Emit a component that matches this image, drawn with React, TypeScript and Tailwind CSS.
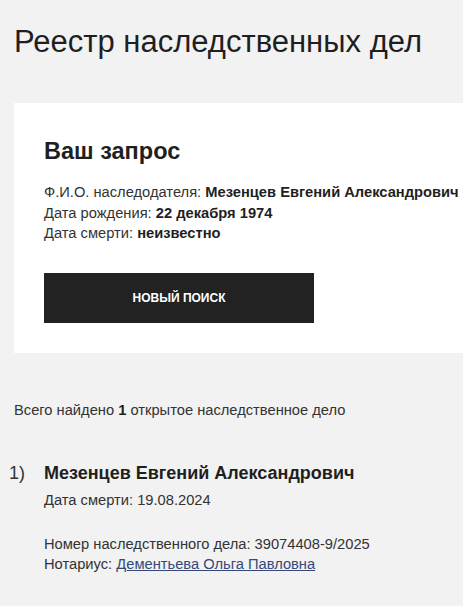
export default function App() {
  return (
    <div
      className="min-h-[606px] w-[463px] overflow-hidden bg-[#f2f2f2] text-[#222]"
      style={{ fontFamily: '"Liberation Sans", Arial, sans-serif' }}
    >
      <h1 className="pl-[14px] pt-[24px] text-[31px] leading-[36px] font-normal text-[#1f1f1f]">
        Реестр наследственных дел
      </h1>

      <div className="ml-[14px] mt-[43px] w-[520px] bg-white pl-[30px] pt-[34px] pb-[30px]">
        <h2 className="text-[23.5px] leading-[28px] font-bold text-[#1f1f1f]">Ваш запрос</h2>
        <div className="mt-[17px] text-[14.7px] leading-[20.5px] text-[#333] whitespace-nowrap">
          <p>
            Ф.И.О. наследодателя: <b className="text-[#1f1f1f]">Мезенцев Евгений Александрович</b>
          </p>
          <p>
            Дата рождения: <b className="text-[#1f1f1f]">22 декабря 1974</b>
          </p>
          <p>
            Дата смерти: <b className="text-[#1f1f1f]">неизвестно</b>
          </p>
        </div>
        <button className="mt-[29px] flex h-[50px] w-[270px] items-center justify-center bg-[#222] text-[12px] font-bold uppercase text-white">
          Новый поиск
        </button>
      </div>

      <p className="pl-[14px] pt-[47px] text-[14.7px] leading-[20px] text-[#333]">
        Всего найдено <b className="text-[#1f1f1f]">1</b> открытое наследственное дело
      </p>

      <div className="mt-[41px] flex">
        <span className="w-[44px] pl-[9px] text-[18px] leading-[24px] text-[#333]">1)</span>
        <div>
          <h3 className="text-[18px] leading-[24px] font-bold text-[#1f1f1f]">
            Мезенцев Евгений Александрович
          </h3>
          <p className="mt-[5px] text-[14.7px] leading-[20px] text-[#333]">Дата смерти: 19.08.2024</p>
          <div className="mt-[24px] text-[14.7px] leading-[20.5px] text-[#333]">
            <p>Номер наследственного дела: 39074408-9/2025</p>
            <p>
              Нотариус:{' '}
              <a href="#" className="text-[#34497a] underline">
                Дементьева Ольга Павловна
              </a>
            </p>
          </div>
        </div>
      </div>
    </div>
  )
}
